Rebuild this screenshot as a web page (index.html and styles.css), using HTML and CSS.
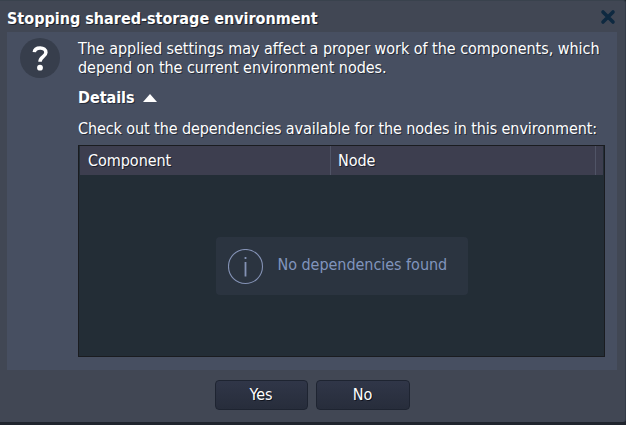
FILE: index.html
```html
<!DOCTYPE html>
<html lang="en">
<head>
<meta charset="utf-8">
<title>Stopping shared-storage environment</title>
<link rel="stylesheet" href="styles.css">
</head>
<body>
<section class="dialog" role="dialog">
  <header class="titlebar">
    <h1 class="title"><span>Stopping shared-storage environment</span></h1>
    <svg class="close" width="16" height="16" viewBox="0 0 16 16"><path d="M3 3 13 13M13 3 3 13"/></svg>
  </header>
  <main class="content">
    <svg class="question" width="40" height="40" viewBox="0 0 40 40">
      <circle class="disc" cx="20" cy="20" r="20"/>
      <path class="hook" d="M14.3 14.2C14.6 11 17 9.9 20.2 9.9C23.5 9.9 25.9 11.5 25.9 14.4C25.9 18.8 20 18.5 20 23.8"/>
      <circle class="dot" cx="20" cy="29.7" r="2.9"/>
    </svg>
    <div class="body">
      <p class="message"><span>The applied settings may affect a proper work of the components, which</span><br><span>depend on the current environment nodes.</span></p>
      <div class="details"><span>Details</span><svg width="14" height="9" viewBox="0 0 14 9"><path d="M0 9 7 1 14 9Z"/></svg></div>
      <p class="hint"><span>Check out the dependencies available for the nodes in this environment:</span></p>
      <div class="grid">
        <div class="grid-head">
          <div class="col component"><span>Component</span></div>
          <div class="col node"><span>Node</span></div>
        </div>
        <div class="grid-body">
          <div class="empty">
            <svg width="36" height="36" viewBox="0 0 36 36"><circle cx="17.5" cy="17.5" r="17"/><path d="M17.5 13V27.5M17.5 8V10"/></svg>
            <span>No dependencies found</span>
          </div>
        </div>
      </div>
    </div>
  </main>
  <footer class="actions">
    <button class="yes"><span>Yes</span></button>
    <button class="no"><span>No</span></button>
  </footer>
</section>
</body>
</html>
```
FILE: styles.css
```css
* { box-sizing: border-box; }
body {
  margin: 0;
  height: 425px;
  overflow: hidden;
  background: #20252e;
  color: #fff;
  font: 16px/19px "DejaVu Sans Condensed", "DejaVu Sans", sans-serif;
  font-stretch: condensed;
  letter-spacing: -0.04px;
}
h1, p { margin: 0; }
svg { display: block; flex: none; }
span { white-space: nowrap; }
.dialog {
  width: 626px;
  height: 422px;
  padding: 0 8px 0 7px;
  background: #414754;
  border-top: 1px solid #39424d;
  border-right: 1px solid #343c49;
  border-radius: 0 3px 3px 0;
}
.titlebar {
  display: flex;
  justify-content: space-between;
  height: 31px;
  padding: 8px 1px 0 0;
}
.title { font-size: 16px; line-height: 19px; letter-spacing: 0; text-shadow: 1px 1px #1c212b; }
.close { fill: none; stroke: #0e2940; stroke-width: 3.6; stroke-linecap: round; }
.content {
  display: flex;
  height: 338px;
  background: #474f61;
  padding: 6px 12px 0 13px;
}
.question .disc { fill: #373e4c; }
.question .dot { fill: #fff; }
.question .hook { fill: none; stroke: #fff; stroke-width: 3.5; }
.body { margin-left: 18px; width: 527px; padding-top: 1px; }
.message, .hint, .details span { text-shadow: 1px 1px #252b38; }
.details { display: flex; align-items: center; gap: 9px; margin-top: 11px; font-weight: bold; }
.details svg { fill: #fff; }
.hint { margin-top: 12px; letter-spacing: -0.09px; }
.grid { margin-top: 7px; height: 212px; border: 1px solid #1a1c20; background: #232d36; }
.grid-head { display: flex; margin: 0 1px; height: 29px; background: #3d3e4f; line-height: 30px; text-shadow: 1px 1px #1c1f2b; }
.col { height: 29px; border-right: 1px solid #505466; }
.component { width: 251px; padding-left: 8px; }
.node { width: 265px; padding-left: 7px; }
.grid-body { display: flex; justify-content: center; padding: 62px 0 0; }
.empty {
  display: flex;
  align-items: center;
  width: 252px;
  height: 58px;
  padding-left: 12px;
  border-radius: 4px;
  background: #2b3440;
  color: #8194bd;
}
.empty svg { margin-top: 1px; fill: none; stroke: #8492b5; stroke-width: 1.1; }
.empty path { stroke-width: 1.8; }
.empty span { margin: -3px 0 0 14px; }
.actions { display: flex; justify-content: center; gap: 8px; padding: 10px 0 0; }
button {
  width: 93px;
  height: 30px;
  padding: 0;
  border: 1px solid #1e2431;
  border-radius: 4px;
  background: linear-gradient(#303648, #272d3b);
  color: #fff;
  font: 16px/28px "DejaVu Sans Condensed", "DejaVu Sans", sans-serif;
  font-stretch: condensed;
  text-shadow: 1px 1px #10141e;
}
.no { width: 94px; }
```
